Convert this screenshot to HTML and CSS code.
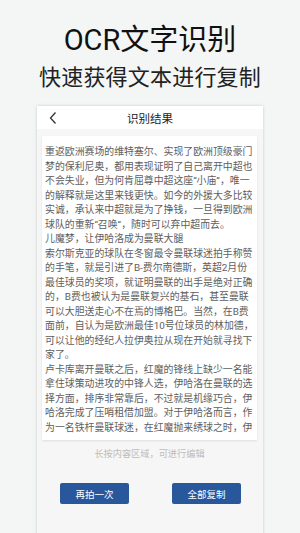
FILE: index.html
```html
<!DOCTYPE html>
<html lang="zh-CN">
<head>
<meta charset="utf-8">
<title>OCR文字识别</title>
<link rel="stylesheet" href="styles.css">
</head>
<body>
<header class="hero">
  <h1 class="hero-title">OCR文字识别</h1>
  <p class="hero-sub">快速获得文本进行复制</p>
</header>
<section class="phone">
  <div class="bar">
    <svg class="back" width="10" height="14" viewBox="0 0 10 14"><polyline points="7.5,1.5 2.5,7 7.5,12.5" fill="none" stroke="#333" stroke-width="1.3"/></svg>
    <span class="bar-title">识别结果</span>
  </div>
  <div class="body">
    <div class="result">
      <p>重返欧洲赛场的维特塞尔、实现了欧洲顶级豪门<br>梦的保利尼奥，都用表现证明了自己离开中超也<br>不会失业，但为何肯屈尊中超这座“小庙”，唯一<br>的解释就是这里来钱更快。如今的外援大多比较<br>实诚，承认来中超就是为了挣钱，一旦得到欧洲<br>球队的重新“召唤”，随时可以弃中超而去。</p>
      <p>儿魔梦，让伊哈洛成为曼联大腿</p>
      <p>索尔斯克亚的球队在冬窗最令曼联球迷拍手称赞<br>的手笔，就是引进了B-费尔南德斯，英超2月份<br>最佳球员的奖项，就证明曼联的出手是绝对正确<br>的，B费也被认为是曼联复兴的基石，甚至曼联<br>可以大胆送走心不在焉的博格巴。当然，在B费<br>面前，自认为是欧洲最佳10号位球员的林加德，<br>可以让他的经纪人拉伊奥拉从现在开始就寻找下<br>家了。</p>
      <p>卢卡库离开曼联之后，红魔的锋线上缺少一名能<br>拿住球策动进攻的中锋人选，伊哈洛在曼联的选<br>择方面，排序非常靠后，不过就是机缘巧合，伊<br>哈洛完成了压哨租借加盟。对于伊哈洛而言，作<br>为一名铁杆曼联球迷，在红魔抛来绣球之时，伊</p>
    </div>
    <p class="hint">长按内容区域，可进行编辑</p>
    <div class="actions">
      <button class="btn">再拍一次</button>
      <button class="btn">全部复制</button>
    </div>
  </div>
</section>
</body>
</html>
```
FILE: styles.css
```css
html, body {
  margin: 0;
  padding: 0;
}
body {
  width: 300px;
  height: 533px;
  overflow: hidden;
  background: #f3f6f5;
  font-family: Roboto, "Noto Sans CJK SC", sans-serif;
}
.hero {
  height: 106px;
  display: flex;
  flex-direction: column;
  align-items: center;
}
.hero-title {
  margin: 22px 0 0;
  font-size: 29px;
  line-height: 36px;
  font-weight: 400;
  color: #111;
}
.hero-sub {
  margin: 6px 0 0;
  font-size: 22px;
  line-height: 28px;
  color: #222;
  letter-spacing: 0.2px;
}
.phone {
  width: 226px;
  height: 440px;
  margin-left: 37px;
  background: #f6f6f6;
  box-shadow: 0 0 3px rgba(0, 0, 0, 0.18);
}
.bar {
  height: 23px;
  background: #fff;
  display: flex;
  align-items: center;
  position: relative;
  justify-content: center;
}
.back {
  position: absolute;
  left: 11px;
  top: 5px;
}
.bar-title {
  font-size: 11.5px;
  color: #222;
}
.body {
  padding: 7px 6px 0 5px;
  display: flex;
  flex-direction: column;
}
.result {
  height: 295px;
  padding: 9px 0 0 3px;
  background: #fff;
  overflow: hidden;
  box-shadow: 0 1px 2px rgba(0, 0, 0, 0.1);
  font-size: 9.9px;
  line-height: 14.5px;
  color: #5e5e5e;
  white-space: nowrap;
}
.result p {
  margin: 0;
}
.hint {
  margin: 7px 0 0;
  text-align: center;
  font-size: 9.2px;
  line-height: 14px;
  color: #bcbcbc;
}
.actions {
  margin-top: 22px;
  padding: 0 16px 0 18px;
  display: flex;
  justify-content: space-between;
}
.btn {
  width: 69px;
  height: 21px;
  padding: 0;
  border: 0;
  border-radius: 2px;
  background: #28579b;
  color: #fff;
  font-family: Roboto, "Noto Sans CJK SC", sans-serif;
  font-size: 9.5px;
}
```
